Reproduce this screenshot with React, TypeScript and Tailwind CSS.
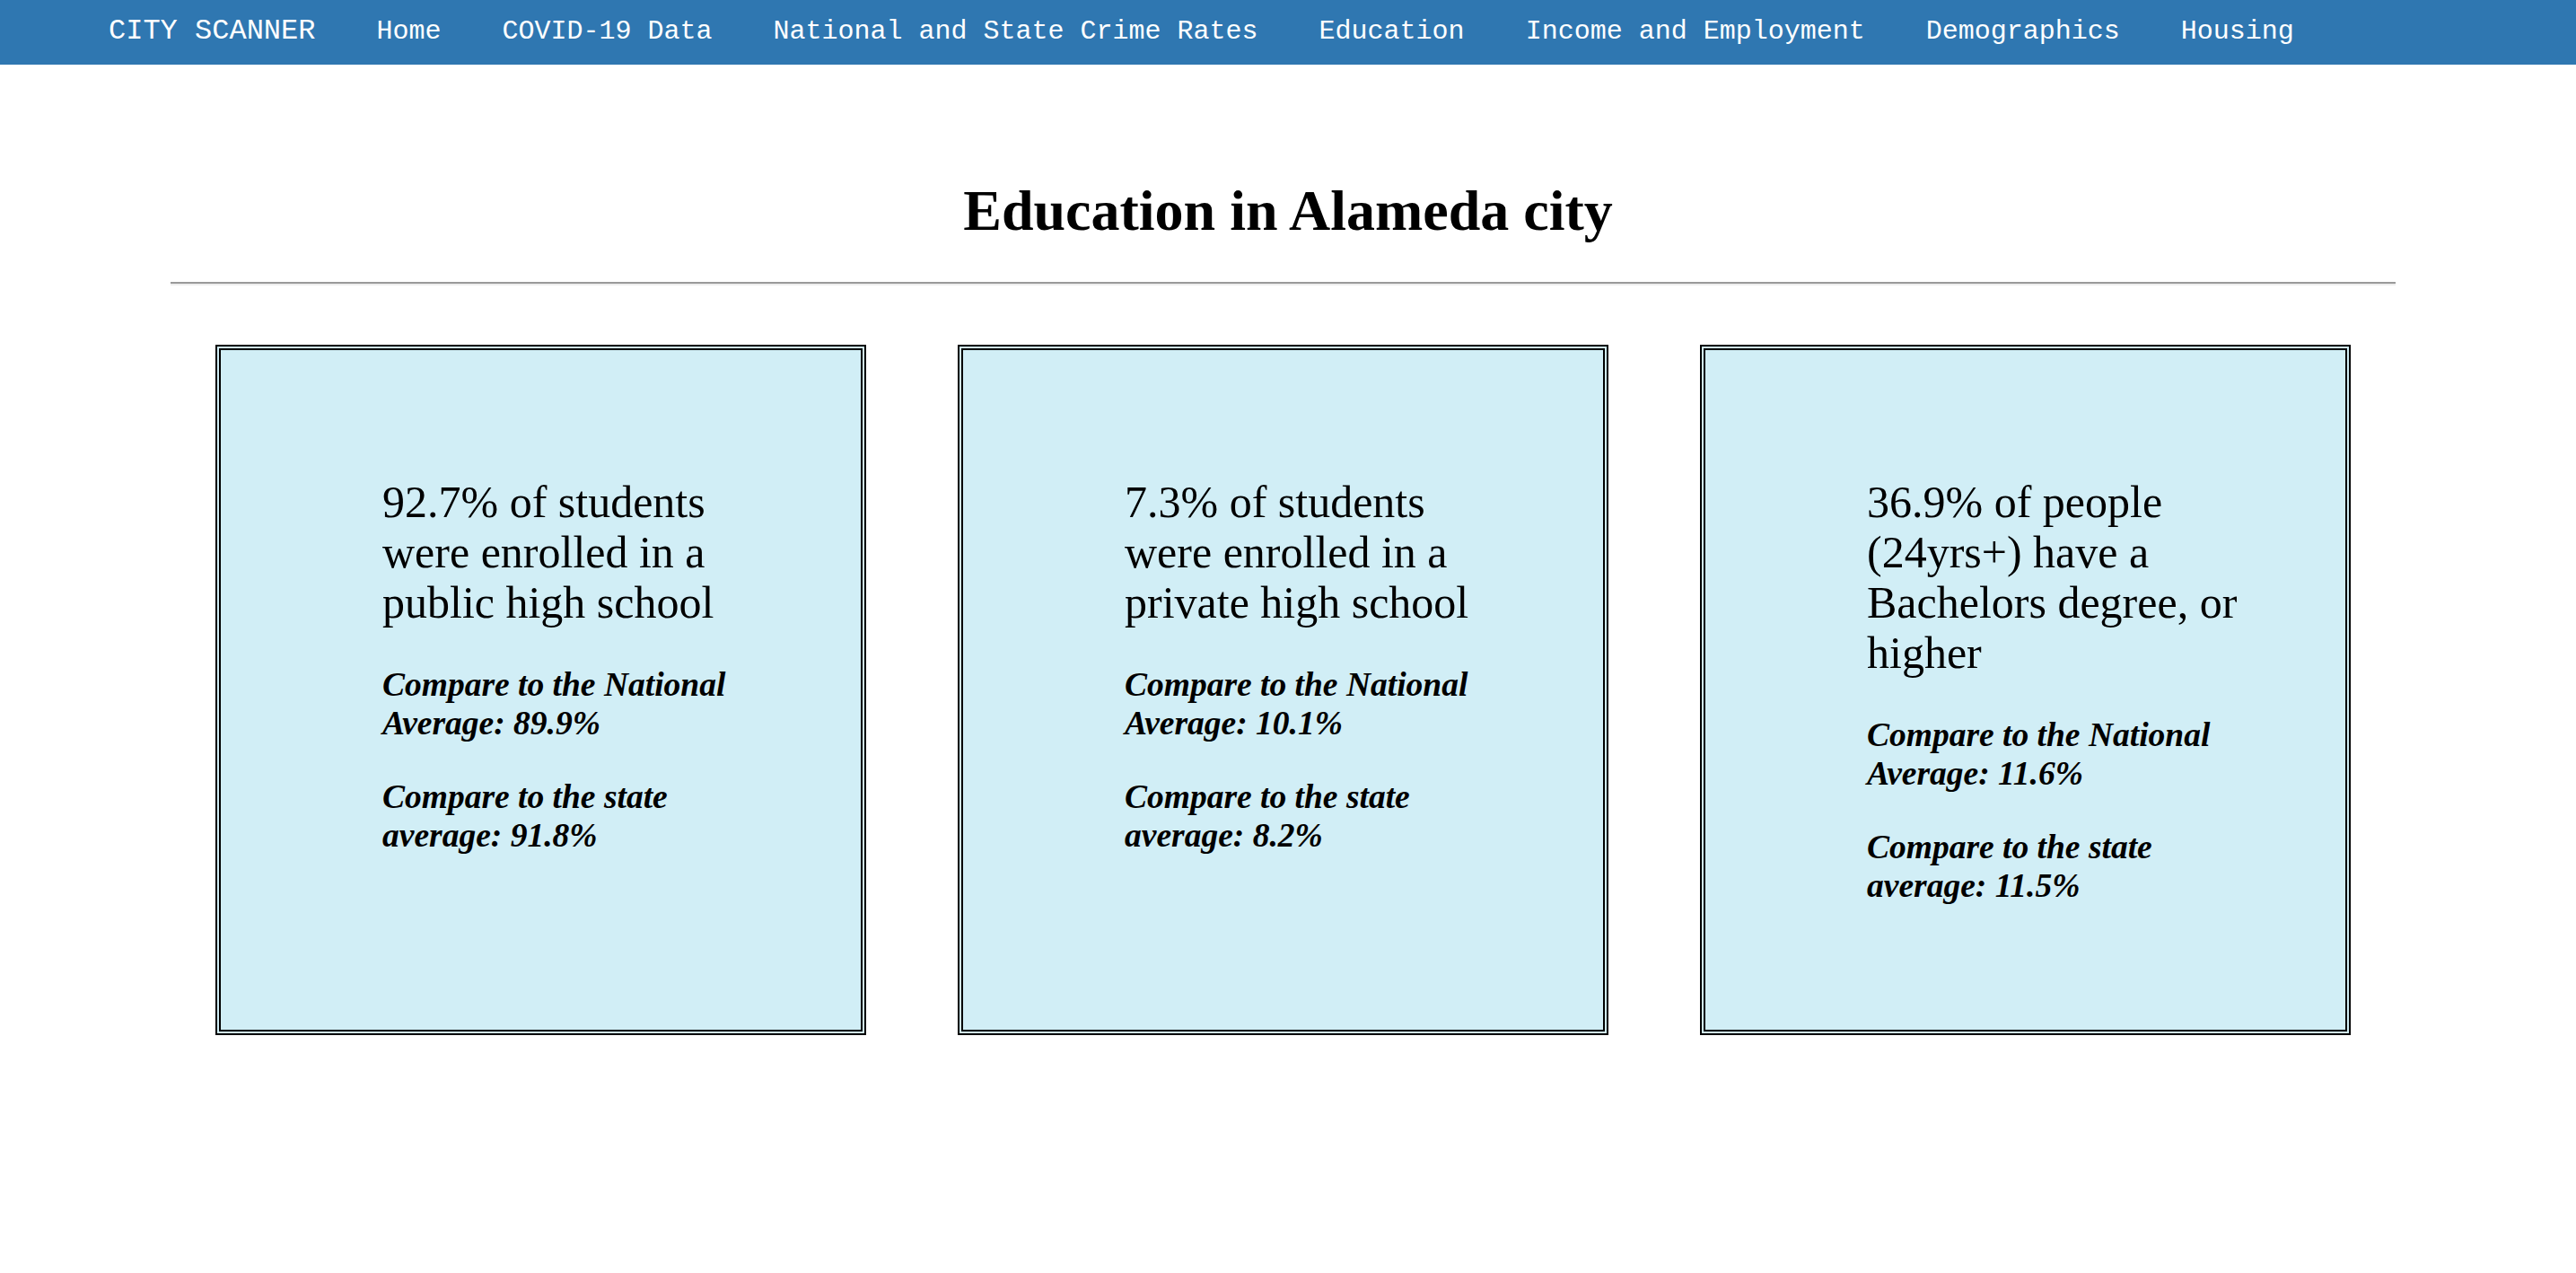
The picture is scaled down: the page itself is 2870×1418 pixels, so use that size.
import React from "react";

const navItems = [
	"Home",
	"COVID-19 Data",
	"National and State Crime Rates",
	"Education",
	"Income and Employment",
	"Demographics",
	"Housing",
];

type Stat = {
	main: string;
	national: string;
	state: string;
};

const stats: Stat[] = [
	{
		main: "92.7% of students were enrolled in a public high school",
		national: "Compare to the National Average: 89.9%",
		state: "Compare to the state average: 91.8%",
	},
	{
		main: "7.3% of students were enrolled in a private high school",
		national: "Compare to the National Average: 10.1%",
		state: "Compare to the state average: 8.2%",
	},
	{
		main: "36.9% of people (24yrs+) have a Bachelors degree, or higher",
		national: "Compare to the National Average: 11.6%",
		state: "Compare to the state average: 11.5%",
	},
];

const StatCard = ({ stat }: { stat: Stat }) => {
	return (
		<div className="w-[725px] h-[769px] shrink-0 border-[6px] border-double border-black bg-[#d1eef6] pl-[180px] pt-[141px]">
			<div className="w-[432px] text-black">
				<p className="text-[50px] leading-[56px]">{stat.main}</p>
				<p className="mt-[42px] text-[37.5px] leading-[43px] font-bold italic">
					{stat.national}
				</p>
				<p className="mt-[39px] text-[37.5px] leading-[43px] font-bold italic">
					{stat.state}
				</p>
			</div>
		</div>
	);
};

export default function App() {
	return (
		<div className="min-h-screen bg-white font-['Liberation_Serif','Times_New_Roman',serif]">
			<nav className="h-[72px] bg-[#2f77b1] flex items-center pb-[3px] pl-[121px] gap-[68px] text-white font-['Liberation_Mono','Courier_New',monospace] whitespace-nowrap">
				<span className="text-[32px] leading-[36px]">CITY SCANNER</span>
				{navItems.map((item) => (
					<a key={item} href="#" className="text-[30px] leading-[34px]">
						{item}
					</a>
				))}
			</nav>

			<h1 className="mt-[126px] text-center text-[64px] leading-[74px] font-bold text-black">
				Education in Alameda city
			</h1>

			<hr className="mt-[42px] ml-[190px] mr-[201px] border-t-2 border-b-2 border-t-[#9a9a9a] border-b-[#eeeeee]" />

			<div className="mt-[66px] flex gap-[102px] pl-[240px]">
				{stats.map((stat) => (
					<StatCard key={stat.main} stat={stat} />
				))}
			</div>
		</div>
	);
}
